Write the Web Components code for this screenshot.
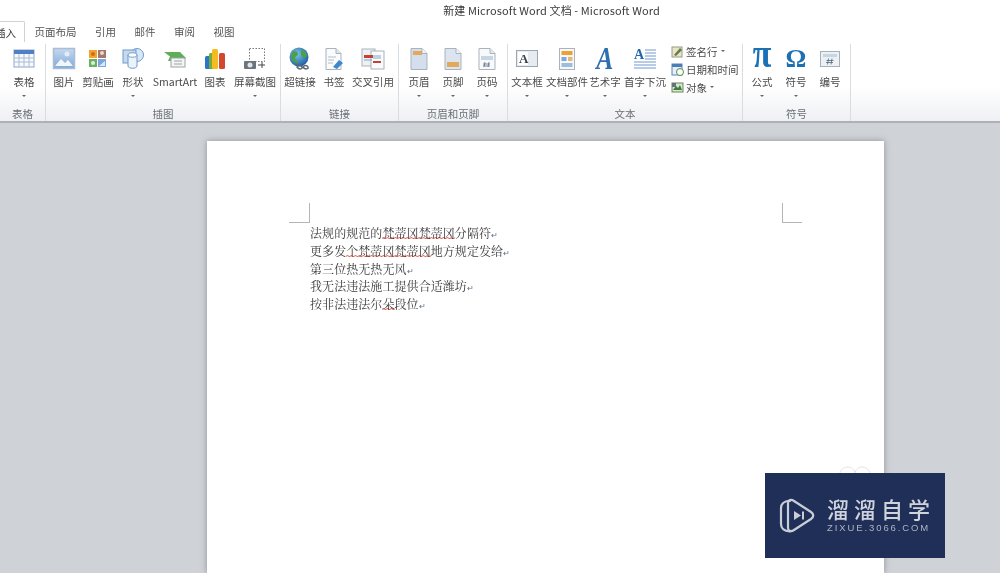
<!DOCTYPE html>
<html lang="zh">
<head>
<meta charset="utf-8">
<title>新建 Microsoft Word 文档 - Microsoft Word</title>
<style>
  html, body { margin: 0; height: 573px; overflow: hidden; }
  body { font-family: "Noto Sans CJK SC", "Liberation Sans", sans-serif; color: #444; background: #cfd2d7; }
</style>
</head>
<body>
<word-app>
  <word-titlebar slot="top">新建 Microsoft Word 文档 - Microsoft Word</word-titlebar>
  <word-tabs slot="top"></word-tabs>
  <word-ribbon slot="top">
    <ribbon-group label="表格" pad="3" width="46">
      <ribbon-btn label="表格" w="42" drop>
        <svg width="22" height="20" viewBox="0 0 22 20"><rect x="1" y="1" width="20" height="17" fill="#f7f9fc" stroke="#8fa8c8"/><rect x="1" y="1" width="20" height="4" fill="#4f7fc4"/><path d="M1 9h20M1 13h20M6 5v13M11 5v13M16 5v13" stroke="#a9bdd6" fill="none"/></svg>
      </ribbon-btn>
    </ribbon-group>
    <ribbon-group label="插图" pad="1" width="235">
      <ribbon-btn label="图片" w="34">
        <svg width="24" height="24" viewBox="0 0 24 24"><defs><linearGradient id="sky" x1="0" y1="0" x2="0" y2="1"><stop offset="0" stop-color="#c6d9ef"/><stop offset="1" stop-color="#7fa9d8"/></linearGradient></defs><rect x="1.5" y="1.5" width="21" height="20" fill="url(#sky)" stroke="#a8bdd6" stroke-width="1.5"/><path d="M3 19l6-7 4 4 3-3 5 6z" fill="#f2f6fb"/><circle cx="15" cy="7" r="2.5" fill="#e4edf7"/></svg>
      </ribbon-btn>
      <ribbon-btn label="剪贴画" w="34">
        <svg width="20" height="22" viewBox="0 0 20 22"><rect x="1" y="2" width="8" height="8" fill="#f0a52c"/><rect x="10" y="2" width="8" height="8" fill="#a3776b"/><rect x="1" y="11" width="8" height="8" fill="#6cb264"/><rect x="10" y="11" width="8" height="8" fill="#7ba7dc"/><circle cx="5" cy="6" r="2" fill="#d9681e"/><circle cx="14" cy="5" r="2" fill="#e9d8cf"/><circle cx="5" cy="15" r="2" fill="#e3f0d8"/><path d="M11 18l6-5v5z" fill="#dce9f8"/></svg>
      </ribbon-btn>
      <ribbon-btn label="形状" w="36" drop>
        <svg width="24" height="24" viewBox="0 0 24 24"><circle cx="16" cy="8" r="6.5" fill="#d8e7f6" stroke="#6f9bcb"/><rect x="2" y="3" width="13" height="13" fill="#c5d9ef" stroke="#6f9bcb"/><path d="M7 8v11c0 3 9 3 9 0V8" fill="#eaf2fa" stroke="#6f9bcb"/><ellipse cx="11.5" cy="8" rx="4.5" ry="2.2" fill="#fff" stroke="#6f9bcb"/></svg>
      </ribbon-btn>
      <ribbon-btn label="SmartArt" w="48">
        <svg width="24" height="20" viewBox="0 0 24 20"><path d="M1 3h16l6 6-4 3H5l2-4.5z" fill="#5fae57"/><rect x="8" y="9" width="14" height="9" fill="#f4f6f4" stroke="#9aa4a8"/><path d="M11 12h8M11 15h8" stroke="#9aa4a8"/></svg>
      </ribbon-btn>
      <ribbon-btn label="图表" w="32">
        <svg width="22" height="24" viewBox="0 0 22 24"><rect x="1" y="9" width="6" height="13" rx="1.5" fill="#2f75c6"/><rect x="5" y="6" width="6" height="16" rx="1.5" fill="#72ad3d"/><rect x="8" y="2" width="6" height="20" rx="1.5" fill="#f4bb22"/><rect x="15" y="6" width="6" height="16" rx="1.5" fill="#d2472d"/></svg>
      </ribbon-btn>
      <ribbon-btn label="屏幕截图" w="48" drop>
        <svg width="24" height="24" viewBox="0 0 24 24"><rect x="6.5" y="1.5" width="15" height="13" fill="none" stroke="#777" stroke-dasharray="1.5 1.5"/><rect x="1" y="14" width="12" height="8" rx="1" fill="#6d747b"/><circle cx="7" cy="18" r="2.5" fill="#dfe4e8"/><path d="M15 18h7M19 15v6" stroke="#444"/></svg>
      </ribbon-btn>
    </ribbon-group>
    <ribbon-group label="链接" pad="1" width="118">
      <ribbon-btn label="超链接" w="36">
        <svg width="24" height="24" viewBox="0 0 24 24"><defs><radialGradient id="globe" cx=".4" cy=".35" r=".7"><stop offset="0" stop-color="#7cc3ea"/><stop offset="1" stop-color="#1a5c9e"/></radialGradient></defs><circle cx="11" cy="10" r="9.5" fill="url(#globe)"/><path d="M5 4c3 0 5 1 5 3s-3 2-3 4 3 2 3 5c-3 1-6-3-7-6zM13 3c3 0 6 3 6 6l-3 2-3-3z" fill="#4e9f45"/><path d="M9 20c1-2 4-2 5 0s-3 3-5 0zM15 20c1-2 4-2 5 0s-3 3-5 0z" fill="none" stroke="#5d6670" stroke-width="1.5"/></svg>
      </ribbon-btn>
      <ribbon-btn label="书签" w="32">
        <svg width="22" height="24" viewBox="0 0 22 24"><path d="M3 1.5h10l5 5v16H3z" fill="#fafbfc" stroke="#aab3bd"/><path d="M13 1.5v5h5" fill="#dfe5ea" stroke="#aab3bd"/><path d="M5 10h8M5 13h6M5 16h5" stroke="#b5bdc5"/><path d="M10 20l6-7 4 3-6 6z" fill="#3f86cb"/></svg>
      </ribbon-btn>
      <ribbon-btn label="交叉引用" w="46">
        <svg width="24" height="24" viewBox="0 0 24 24"><rect x="1" y="2" width="13" height="17" fill="#eef1f4" stroke="#aab3bd"/><rect x="10" y="4" width="13" height="18" fill="#fafbfc" stroke="#aab3bd"/><rect x="3" y="8" width="9" height="3" fill="#c9402e"/><rect x="12" y="14" width="8" height="2" fill="#c9402e"/><path d="M12 9h8M12 11h8M3 13h8" stroke="#7ea6d1"/></svg>
      </ribbon-btn>
    </ribbon-group>
    <ribbon-group label="页眉和页脚" pad="3" width="109">
      <ribbon-btn label="页眉" w="34" drop>
        <svg width="20" height="24" viewBox="0 0 20 24"><path d="M2 1.5h11l5 5v16H2z" fill="#d3dfec" stroke="#aab3bd"/><path d="M13 1.5v5h5" fill="#f3f5f7" stroke="#aab3bd"/><rect x="4" y="4" width="9" height="4" fill="#e2a95a"/></svg>
      </ribbon-btn>
      <ribbon-btn label="页脚" w="34" drop>
        <svg width="20" height="24" viewBox="0 0 20 24"><path d="M2 1.5h11l5 5v16H2z" fill="#dce5ef" stroke="#aab3bd"/><path d="M13 1.5v5h5" fill="#f3f5f7" stroke="#aab3bd"/><rect x="4" y="15" width="12" height="5" fill="#e2a95a"/></svg>
      </ribbon-btn>
      <ribbon-btn label="页码" w="34" drop>
        <svg width="20" height="24" viewBox="0 0 20 24"><path d="M2 1.5h11l5 5v16H2z" fill="#f7f9fb" stroke="#aab3bd"/><path d="M13 1.5v5h5" fill="#e5eaef" stroke="#aab3bd"/><rect x="4" y="9" width="12" height="4" fill="#c5d5e6"/><path d="M8 15l-1 5M12 15l-1 5M6 17h7M6 19h7" stroke="#5c6f85" stroke-width=".8"/></svg>
      </ribbon-btn>
    </ribbon-group>
    <ribbon-group label="文本" pad="1" width="235">
      <ribbon-btn label="文本框" w="36" drop>
        <svg width="24" height="20" viewBox="0 0 24 20"><rect x="1.5" y="1.5" width="21" height="16" fill="#e6ebf1" stroke="#9aa6b3"/><rect x="3" y="3" width="10" height="13" fill="#fff"/><text x="4" y="14" font-family="Liberation Serif" font-weight="700" font-size="13" fill="#3b4450">A</text></svg>
      </ribbon-btn>
      <ribbon-btn label="文档部件" w="44" drop>
        <svg width="18" height="24" viewBox="0 0 18 24"><rect x="1.5" y="1.5" width="15" height="21" fill="#f6f8fa" stroke="#aab3bd"/><rect x="3.5" y="4" width="11" height="4" fill="#ef9f33"/><rect x="3.5" y="10" width="5" height="4" fill="#7ea8d8"/><rect x="10" y="10" width="4.5" height="4" fill="#e9b770"/><rect x="3.5" y="16" width="11" height="4" fill="#9dbde0"/></svg>
      </ribbon-btn>
      <ribbon-btn label="艺术字" w="32" drop>
        <span style="display:block;font:italic 700 32px/27px 'Liberation Serif',serif;color:#2f6fb0;transform:scaleX(.8)">A</span>
      </ribbon-btn>
      <ribbon-btn label="首字下沉" w="48" drop>
        <svg width="24" height="24" viewBox="0 0 24 24"><text x="1" y="12" font-family="Liberation Serif" font-weight="700" font-size="14" fill="#2566b0">A</text><path d="M12 3h11M12 6h11M12 9h11M12 12h11M1 15h22M1 18h22M1 21h22" stroke="#6f9bcf"/></svg>
      </ribbon-btn>
      <ribbon-col>
        <ribbon-small label="签名行" drop>
          <svg width="13" height="13" viewBox="0 0 13 13"><rect x="1" y="2" width="10" height="10" fill="#e9e3c9" stroke="#9a9a88"/><path d="M3 10l6-7 2 2-6 6z" fill="#5e7f3e"/></svg>
        </ribbon-small>
        <ribbon-small label="日期和时间">
          <svg width="13" height="13" viewBox="0 0 13 13"><rect x="1" y="1" width="10" height="11" fill="#e6eef7" stroke="#5c86b5"/><rect x="1" y="1" width="10" height="3" fill="#4c7eb6"/><circle cx="9" cy="9" r="3.5" fill="#fff" stroke="#4f8f4a"/></svg>
        </ribbon-small>
        <ribbon-small label="对象" drop>
          <svg width="13" height="13" viewBox="0 0 13 13"><rect x="1" y="2" width="11" height="9" fill="#d9e7d0" stroke="#67865a"/><path d="M2 9l3-4 2 2 2-3 2 5z" fill="#3f7d3b"/><rect x="1" y="2" width="4" height="4" fill="#68707a"/></svg>
        </ribbon-small>
      </ribbon-col>
    </ribbon-group>
    <ribbon-group label="符号" pad="2" width="108">
      <ribbon-btn label="公式" w="34" drop>
        <span style="display:block;font:700 34px/27px 'Liberation Serif',serif;color:#1c70b4;transform:translateY(-5px) scaleY(1.2)">π</span>
      </ribbon-btn>
      <ribbon-btn label="符号" w="34" drop>
        <span style="display:block;font:700 26px/27px 'Liberation Serif',serif;color:#1c70b4">Ω</span>
      </ribbon-btn>
      <ribbon-btn label="编号" w="34">
        <svg width="22" height="20" viewBox="0 0 22 20"><rect x="1.5" y="2.5" width="19" height="15" fill="#eef1f4" stroke="#a6b0ba"/><rect x="4" y="5" width="14" height="3" fill="#c6d6e7"/><path d="M9.5 9.5l-1 6M13 9.5l-1 6M7.5 11.5h7M7 13.5h7" stroke="#54677c" stroke-width=".8"/></svg>
      </ribbon-btn>
    </ribbon-group>
  </word-ribbon>
  <word-page>
    <doc-line>法规的规范的<doc-err>梵蒂冈梵蒂冈</doc-err>分隔符</doc-line>
    <doc-line>更多发<doc-err>个梵蒂冈梵蒂冈</doc-err>地方规定发给</doc-line>
    <doc-line>第三位热无热无风</doc-line>
    <doc-line>我无法违法施工提供合适潍坊</doc-line>
    <doc-line>按非法违法尔<doc-err>朵</doc-err>段位</doc-line>
  </word-page>
  <water-mark slot="over"></water-mark>
</word-app>

<script>
// small helper, every element below is just a template and a class
function tpl(html) {
  const t = document.createElement('template');
  t.innerHTML = html;
  return t;
}

function shadow(el, template) {
  if (!el.shadowRoot) {
    el.attachShadow({ mode: 'open' });
    el.shadowRoot.appendChild(template.content.cloneNode(true));
  }
  return el.shadowRoot;
}

const appTpl = tpl(`
  <style>
    :host { display: flex; flex-direction: column; position: relative; width: 1000px; height: 573px; overflow: hidden; filter: blur(.4px); }
    .canvas { flex: 1; min-height: 0; display: flex; flex-direction: column; align-items: flex-start; padding: 18px 0 0 207px; background: #cfd2d7; }
  </style>
  <slot name="top"></slot>
  <div class="canvas"><slot></slot></div>
  <slot name="over"></slot>
`);
class WordApp extends HTMLElement {
  connectedCallback() { shadow(this, appTpl); }
}

const titleTpl = tpl(`
  <style>
    :host { display: flex; justify-content: center; height: 21px; line-height: 21px; padding-left: 103px; background: #fff; font-size: 11px; color: #3a3a3a; letter-spacing: .1px; }
  </style>
  <slot></slot>
`);
class WordTitlebar extends HTMLElement {
  connectedCallback() { shadow(this, titleTpl); }
}

const tabsTpl = tpl(`
  <style>
    :host { display: flex; background: #fff; font-size: 10.5px; color: #555; border-bottom: 2px solid #dcdee1; margin-bottom: -2px; box-sizing: border-box; height: 23px; }
    span { display: block; line-height: 21px; text-align: center; }
    .on { width: 25px; height: 23px; box-sizing: border-box; border: 1px solid #cfd2d6; border-left: 0; border-bottom: 0; border-radius: 0 2px 0 0; background: #fff; text-align: right; padding-right: 8px; color: #333; overflow: hidden; white-space: nowrap; direction: rtl; }
    .t1 { width: 61px; } .t2 { width: 39px; } .t3 { width: 40px; } .t4 { width: 39px; } .t5 { width: 40px; }
  </style>
  <span class="on">插入</span>
  <span class="t1">页面布局</span>
  <span class="t2">引用</span>
  <span class="t3">邮件</span>
  <span class="t4">审阅</span>
  <span class="t5">视图</span>
`);
class WordTabs extends HTMLElement {
  connectedCallback() { shadow(this, tabsTpl); }
}

const ribbonTpl = tpl(`
  <style>
    :host { display: flex; box-sizing: border-box; height: 81px; padding-top: 2px; background: linear-gradient(#fff 0, #fff 55%, #eef0f3 100%); border-bottom: 2px solid #aeb1b6; }
  </style>
  <slot></slot>
`);
class WordRibbon extends HTMLElement {
  connectedCallback() { shadow(this, ribbonTpl); }
}

const groupTpl = tpl(`
  <style>
    :host { display: flex; flex-direction: column; flex: none; box-sizing: border-box; height: 77px; border-right: 1px solid #d9dce0; }
    .items { display: flex; flex: 1; min-height: 0; }
    .name { height: 15px; line-height: 15px; text-align: center; font-size: 10.5px; color: #6b6f75; }
  </style>
  <div class="items"><slot></slot></div>
  <div class="name"></div>
`);
class RibbonGroup extends HTMLElement {
  connectedCallback() {
    const root = shadow(this, groupTpl);
    this.style.width = this.getAttribute('width') + 'px';
    root.querySelector('.items').style.paddingLeft = this.getAttribute('pad') + 'px';
    root.querySelector('.name').textContent = this.getAttribute('label');
  }
}

const btnTpl = tpl(`
  <style>
    :host { display: flex; flex-direction: column; align-items: center; flex: none; font-size: 10.5px; color: #4a4a4a; }
    .icon { height: 27px; display: flex; align-items: center; justify-content: center; margin-top: 1px; }
    .label { height: 20px; line-height: 20px; white-space: nowrap; }
    .drop { width: 0; height: 0; margin-top: 3px; border: 2px solid transparent; border-top: 2px solid #666; border-bottom: 0; }
  </style>
  <div class="icon"><slot></slot></div>
  <div class="label"></div>
  <div class="drop"></div>
`);
class RibbonBtn extends HTMLElement {
  connectedCallback() {
    const root = shadow(this, btnTpl);
    this.style.width = this.getAttribute('w') + 'px';
    root.querySelector('.label').textContent = this.getAttribute('label');
    if (!this.hasAttribute('drop')) root.querySelector('.drop').remove();
  }
}

const colTpl = tpl(`
  <style>
    :host { display: flex; flex-direction: column; gap: 4px; padding: 0 0 0 2px; flex: none; }
  </style>
  <slot></slot>
`);
class RibbonCol extends HTMLElement {
  connectedCallback() { shadow(this, colTpl); }
}

const smallTpl = tpl(`
  <style>
    :host { display: flex; align-items: center; gap: 2px; height: 14px; font-size: 10.5px; color: #4a4a4a; white-space: nowrap; }
    .drop { width: 0; height: 0; margin-left: 1px; border: 2px solid transparent; border-top: 2px solid #666; border-bottom: 0; }
    ::slotted(svg) { flex: none; }
  </style>
  <slot></slot>
  <span class="label"></span>
`);
class RibbonSmall extends HTMLElement {
  connectedCallback() {
    const root = shadow(this, smallTpl);
    root.querySelector('.label').textContent = this.getAttribute('label');
    if (this.hasAttribute('drop')) {
      const d = document.createElement('span');
      d.className = 'drop';
      root.appendChild(d);
    }
  }
}

const pageTpl = tpl(`
  <style>
    :host { display: block; box-sizing: border-box; width: 677px; flex: 1; padding-top: 62px; background: #fff; box-shadow: 0 0 6px rgba(90, 95, 105, .55); }
    .marks { display: flex; justify-content: space-between; padding: 0 82px; }
    .mark { height: 20px; box-sizing: border-box; border-bottom: 1px solid #b5b5b5; }
    .left { width: 21px; border-right: 1px solid #b5b5b5; }
    .right { width: 20px; border-left: 1px solid #b5b5b5; }
    .body { padding: 1px 0 0 103px; }
    .rings { display: flex; justify-content: flex-end; padding: 153px 13px 0 0; }
  </style>
  <div class="marks"><div class="mark left"></div><div class="mark right"></div></div>
  <div class="body"><slot></slot></div>
  <div class="rings">
    <svg width="32" height="8" viewBox="0 0 32 8"><path d="M1 8C1 3 6 1 9 1s7 2 7 7M16 8c0-5 4-7 7-7s8 2 8 7" fill="none" stroke="#e3e3e3"/></svg>
  </div>
`);
class WordPage extends HTMLElement {
  connectedCallback() { shadow(this, pageTpl); }
}

// no whitespace in these two templates, it would show up between the characters
const lineTpl = tpl(`<style>
    :host { display: block; height: 17.8px; line-height: 17.8px; font-size: 12px; letter-spacing: .07px; color: #3a3a3a; white-space: nowrap; font-family: "Noto Serif CJK SC", "Noto Sans CJK SC", sans-serif; }
    .mark { color: #5b6f8a; font-size: 8px; margin-left: 0; }
  </style><slot></slot><span class="mark">↵</span>`);
class DocLine extends HTMLElement {
  connectedCallback() { shadow(this, lineTpl); }
}

// the spell check line, word's wave is flatter than text-decoration wavy
const wave = "url(\"data:image/svg+xml,%3Csvg xmlns='http://www.w3.org/2000/svg' width='4' height='2'%3E%3Cpath d='M0 1.5Q1 0 2 .8T4 1.5' fill='none' stroke='%23e0453a' stroke-width='.9'/%3E%3C/svg%3E\")";
const errTpl = tpl(`<style>
    :host { display: inline; background: ${wave} repeat-x 0 calc(100% - 2px) / 4px 2px; }
  </style><slot></slot>`);
class DocErr extends HTMLElement {
  connectedCallback() { shadow(this, errTpl); }
}

const markTpl = tpl(`
  <style>
    :host { position: absolute; left: 765px; top: 473px; width: 180px; height: 85px; box-sizing: border-box; padding: 25px 0 0 14px; display: flex; gap: 12px; background: #1f2f58; color: #cfd3dc; font-family: "Noto Sans CJK SC", sans-serif; }
    svg { flex: none; }
    .zh { font-size: 22px; font-weight: 500; line-height: 24px; height: 26px; letter-spacing: 5px; white-space: nowrap; margin-top: -2px; }
    .en { font-family: "Liberation Sans", sans-serif; font-size: 9.5px; line-height: 11px; letter-spacing: 1.9px; white-space: nowrap; color: #aeb4c2; }
  </style>
  <svg width="36" height="36" viewBox="0 0 36 36">
    <path d="M11 3v-.5C6 3 2 5 2 10v16c0 5 4 7 9 7.5" fill="none" stroke="#c9cdd6" stroke-width="2.2" stroke-linecap="round"/>
    <path d="M9 5c0-3 3-4 6-2l17 11c3 2 3 5 0 7L15 32c-3 2-6 1-6-2z" fill="none" stroke="#c9cdd6" stroke-width="2.2" stroke-linejoin="round"/>
    <path d="M15 13l7 4.5-7 4.5z" fill="#c9cdd6"/>
    <path d="M24 13.5v8" stroke="#c9cdd6" stroke-width="2"/>
  </svg>
  <div>
    <div class="zh">溜溜自学</div>
    <div class="en">ZIXUE.3066.COM</div>
  </div>
`);
class WaterMark extends HTMLElement {
  connectedCallback() { shadow(this, markTpl); }
}

customElements.define('word-app', WordApp);
customElements.define('word-titlebar', WordTitlebar);
customElements.define('word-tabs', WordTabs);
customElements.define('word-ribbon', WordRibbon);
customElements.define('ribbon-group', RibbonGroup);
customElements.define('ribbon-btn', RibbonBtn);
customElements.define('ribbon-col', RibbonCol);
customElements.define('ribbon-small', RibbonSmall);
customElements.define('word-page', WordPage);
customElements.define('doc-line', DocLine);
customElements.define('doc-err', DocErr);
customElements.define('water-mark', WaterMark);
</script>
</body>
</html>
